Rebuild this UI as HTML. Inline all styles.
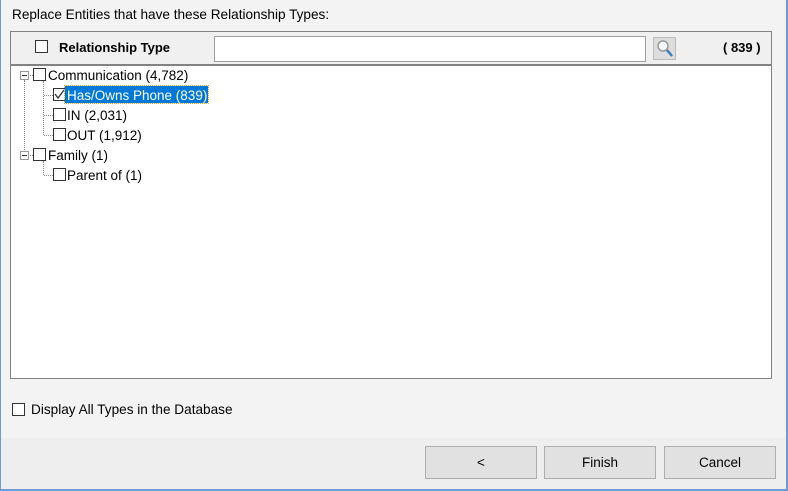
<!DOCTYPE html>
<html><head><style>
body{margin:0;width:788px;height:491px;position:relative;overflow:hidden;background:#f3f3f3;font-family:"Liberation Sans",sans-serif;font-size:13.5px;color:#000}
.a{position:absolute}
.cb{position:absolute;width:11px;height:11px;border:1px solid #333;background:#fff}
.t{position:absolute;white-space:nowrap;line-height:16px}
.dv{position:absolute;border-left:1px dotted #888}
.dh{position:absolute;border-top:1px dotted #888}
.mn{position:absolute;width:7px;height:7px;border:1px solid #999;background:#fff}
.mn:after{content:"";position:absolute;left:1px;top:3px;width:5px;height:1px;background:#333}
.btn{position:absolute;top:446px;height:31px;width:110px;background:#e1e1e1;border:1px solid #adadad;text-align:center;line-height:31px;font-size:13.5px}
</style></head><body>
<div class="a" style="left:0;top:0;width:1px;height:491px;background:#6d9bd3"></div>
<div class="a" style="left:786px;top:0;width:2px;height:491px;background:#6d9bd3"></div>
<div class="a" style="left:1px;top:438px;width:785px;height:51px;background:#eeeeee"></div>
<div class="a" style="left:0;top:489px;width:788px;height:2px;background:#6d9bd3"></div>
<div class="t" style="left:12px;top:7px;font-size:13.6px">Replace Entities that have these Relationship Types:</div>
<div class="a" style="left:10px;top:31px;width:760px;height:346px;border:1px solid #828282;background:#fff"></div>
<div class="a" style="left:11px;top:32px;width:760px;height:32px;background:#f0f0f0;border-bottom:2px solid #828282"></div>
<div class="cb" style="left:35px;top:40px"></div>
<div class="t" style="left:59px;top:40px;font-weight:bold;font-size:13px">Relationship Type</div>
<div class="a" style="left:214px;top:36px;width:430px;height:24px;background:#fff;border:1px solid #a0a0a0"></div>
<div class="a" style="left:653px;top:37px;width:21px;height:21px;background:#ddd;border:1px solid #bbb">
<svg width="21" height="21"><circle cx="9" cy="8" r="5" fill="#f4f8fb" stroke="#999" stroke-width="1.5"/><line x1="13" y1="12" x2="18" y2="18" stroke="#3a7fc0" stroke-width="2.5"/></svg></div>
<div class="t" style="left:723px;top:40px;font-weight:bold;font-size:13px">( 839 )</div>

<div class="dv" style="left:24px;top:80px;height:76px"></div>
<div class="dv" style="left:43px;top:81px;height:54px"></div>
<div class="dv" style="left:43px;top:161px;height:14px"></div>
<div class="dh" style="left:28px;top:75px;width:5px"></div>
<div class="dh" style="left:28px;top:155px;width:5px"></div>
<div class="dh" style="left:44px;top:95px;width:9px"></div>
<div class="dh" style="left:44px;top:115px;width:9px"></div>
<div class="dh" style="left:44px;top:135px;width:9px"></div>
<div class="dh" style="left:44px;top:175px;width:9px"></div>
<div class="mn" style="left:20px;top:71px"></div>
<div class="mn" style="left:20px;top:151px"></div>
<div class="cb" style="left:33px;top:68px"></div><div class="t" style="left:48px;top:68px">Communication (4,782)</div>
<div class="cb" style="left:53px;top:88px"><svg width="11" height="11" style="position:absolute"><path d="M1 5 L4 9 L10 1" fill="none" stroke="#333" stroke-width="1.3"/></svg></div>
<div class="a" style="left:65px;top:86px;width:143px;height:17px;background:#0078d7;outline:1px dotted #e8a030"></div>
<div class="t" style="left:67px;top:88px;color:#fff">Has/Owns Phone (839)</div>
<div class="cb" style="left:53px;top:108px"></div><div class="t" style="left:67px;top:108px">IN (2,031)</div>
<div class="cb" style="left:53px;top:128px"></div><div class="t" style="left:67px;top:128px">OUT (1,912)</div>
<div class="cb" style="left:33px;top:148px"></div><div class="t" style="left:48px;top:148px">Family (1)</div>
<div class="cb" style="left:53px;top:168px"></div><div class="t" style="left:67px;top:168px">Parent of (1)</div>

<div class="cb" style="left:12px;top:403px"></div>
<div class="t" style="left:31px;top:402px;font-size:13.6px">Display All Types in the Database</div>
<div class="btn" style="left:425px">&lt;</div>
<div class="btn" style="left:544px">Finish</div>
<div class="btn" style="left:664px">Cancel</div>
</body></html>
